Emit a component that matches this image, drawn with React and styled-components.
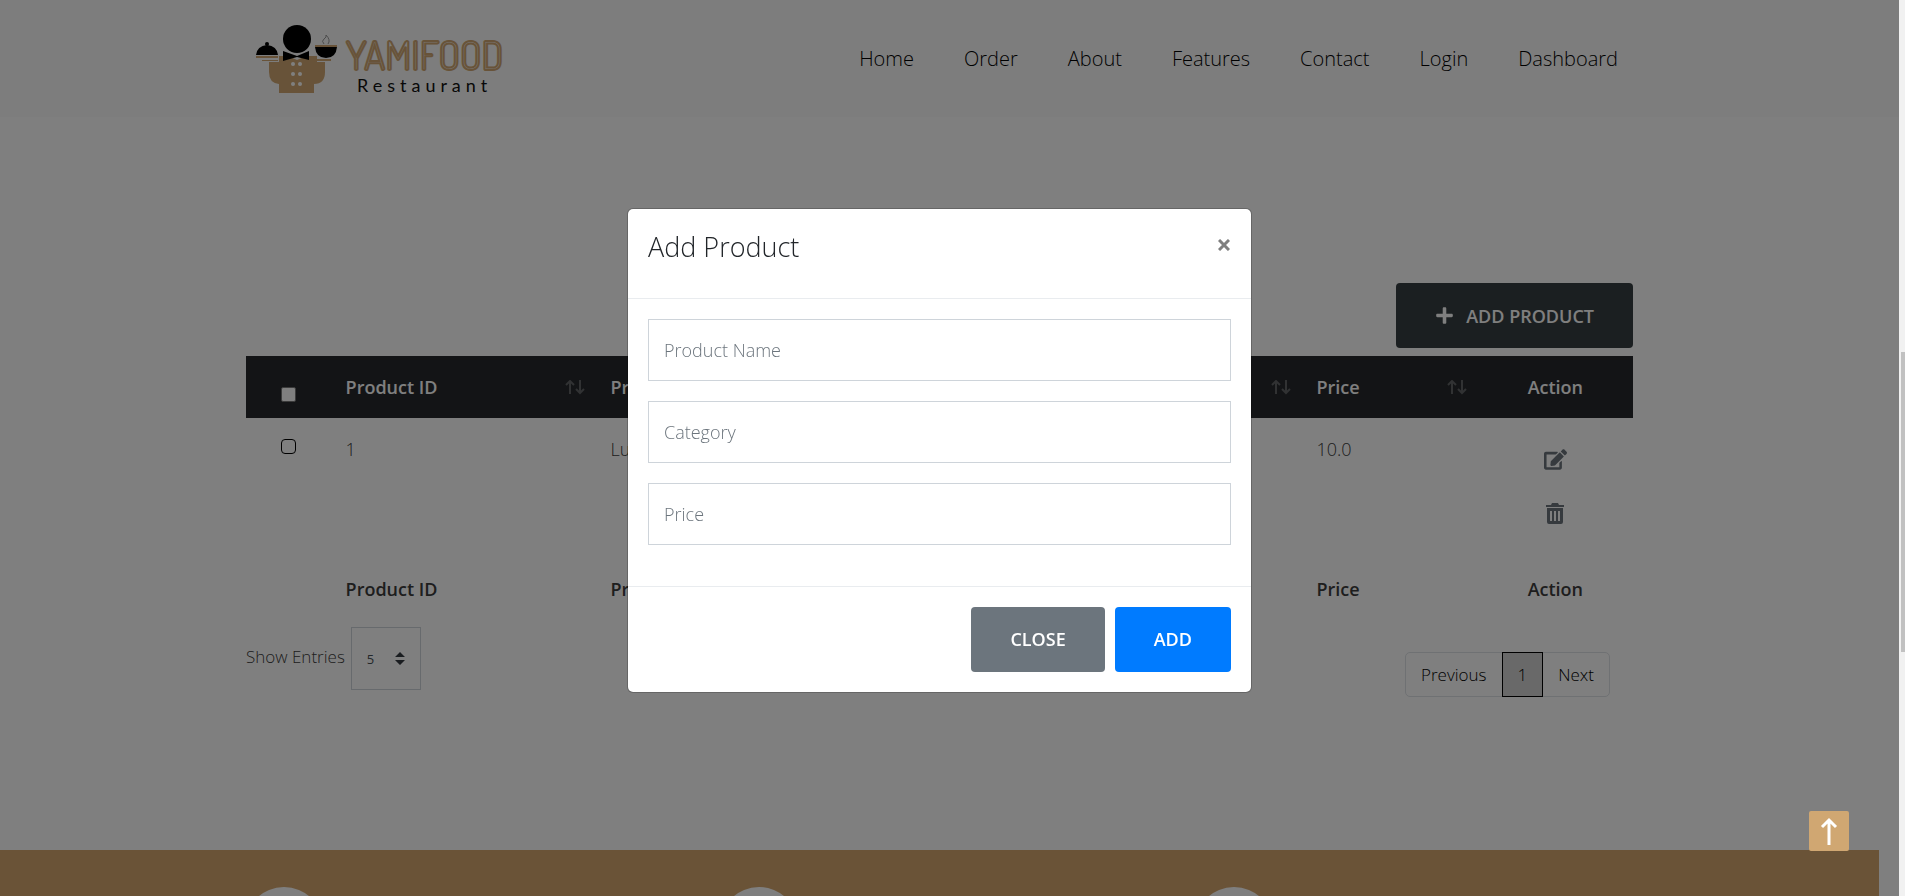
import React from 'react';
import styled, { createGlobalStyle, css } from 'styled-components';
import { FaEdit, FaPlus } from 'react-icons/fa';

const GlobalStyle = createGlobalStyle`
  *, *::before, *::after { box-sizing: border-box; }
  body { margin: 0; background: #fff; }
  body, button, input, select { font-family: 'Open Sans', 'Noto Sans', sans-serif; }
`;

const Viewport = styled.div`
  position: relative;
  height: 100vh;
  overflow: hidden;
  padding-right: 26px;
  font-size: 17px;
  font-weight: 300;
  line-height: 30px;
  color: #3c3c3c;
`;

const Container = styled.div`
  width: 100%;
  max-width: 1387px;
  margin: 0 auto;
`;

const Header = styled.header`
  margin-right: -26px;
  padding-right: 26px;
  background: #fafafa;
`;

const HeaderBar = styled(Container)`
  display: flex;
  align-items: center;
  justify-content: space-between;
  height: 117px;
  padding: 0 15px 0 8px;
`;

const Nav = styled.nav`
  display: flex;
  gap: 50px;
`;

const NavLink = styled.a`
  font-size: 20px;
  color: #010101;
  text-decoration: none;
`;

const Main = styled(Container).attrs({ as: 'main' })`
  padding: 166px 0 153px;
`;

const Toolbar = styled.div`
  display: flex;
  justify-content: flex-end;
  margin-bottom: 8px;
`;

const tones = {
  dark: '#363e42',
  grey: '#6c757d',
  blue: '#007bff',
};

const Button = styled.button`
  display: inline-flex;
  align-items: center;
  gap: 12px;
  height: 65px;
  padding: 0 39px;
  border: 0;
  border-radius: 4px;
  background: ${({ $tone }) => tones[$tone]};
  color: #fff;
  font-size: 18px;
  font-weight: 600;
  text-transform: uppercase;
  cursor: pointer;
`;

const Table = styled.table`
  width: 100%;
  table-layout: fixed;
  border-collapse: collapse;
`;

const cell = css`
  padding: 16px ${({ $center }) => ($center ? '15px' : '11px')} 16px 15px;
  text-align: ${({ $center }) => ($center ? 'center' : 'left')};
  vertical-align: top;
  font-size: 18px;
`;

const HeadCell = styled.th`
  ${cell}
  font-weight: 600;
`;

const Cell = styled.td`
  ${cell}
`;

const HeadRow = styled.tr`
  height: 62px;
  background: #26292c;
  color: #fff;
`;

const BodyRow = styled.tr`
  height: 140px;
`;

const SortLabel = styled.span`
  display: flex;
  align-items: center;
  justify-content: space-between;
`;

const Check = styled.input`
  display: block;
  width: 15px;
  height: 15px;
  margin: ${({ $head }) => ($head ? '15px' : '5px')} auto 0;
  appearance: none;
  border: 1px solid ${({ $head }) => ($head ? '#767676' : '#000')};
  border-radius: ${({ $head }) => ($head ? '2px' : '4px')};
  background: #fff;
`;

const Actions = styled.div`
  display: flex;
  flex-direction: column;
  align-items: center;
  gap: 32px;
  padding-top: 14px;
`;

const IconButton = styled.button`
  display: flex;
  padding: 0;
  border: 0;
  background: none;
  color: #6c757d;
  cursor: pointer;
`;

const TableFooter = styled.div`
  display: grid;
  grid-template-columns: 1fr auto 1fr;
  align-items: start;
  padding: 7px 23px 0 0;
`;

const Entries = styled.label`
  display: flex;
  align-items: flex-start;
  gap: 6px;
  line-height: 60px;
`;

const SelectBox = styled.span`
  display: grid;
  align-items: center;
  width: 70px;
  height: 63px;
  border: 1px solid #ced4da;

  > * { grid-area: 1 / 1; }
  > svg { justify-self: end; margin-right: 15px; pointer-events: none; }
`;

const Select = styled.select`
  width: 100%;
  height: 100%;
  padding: 0 15px;
  border: 0;
  appearance: none;
  background: none;
  color: #495057;
  font-size: 13px;
`;

const Info = styled.p`
  margin: 36px 0 0;
`;

const Pages = styled.div`
  display: flex;
  justify-self: end;
  margin-top: 25px;
`;

const PageButton = styled.button`
  height: 45px;
  padding: 0 15px;
  margin-left: -1px;
  border: 1px solid ${({ $current }) => ($current ? '#000' : '#dee2e6')};
  background: ${({ $current }) => ($current ? '#d2d2d2' : '#fff')};
  color: #000;
  font-size: 17px;
  font-weight: 300;
  position: relative;
  z-index: ${({ $current }) => ($current ? 1 : 0)};
  cursor: pointer;

  &:first-child { border-radius: 5px 0 0 5px; }
  &:last-child { border-radius: 0 5px 5px 0; }
`;

const Contact = styled.section`
  padding: 37px 0;
  background: #d5a76f;
`;

const ContactGrid = styled.div`
  display: grid;
  grid-template-columns: repeat(3, 1fr);
  max-width: 1425px;
  margin: 0 auto;
`;

const Disc = styled.span`
  width: 78px;
  height: 78px;
  margin-left: 18px;
  border-radius: 50%;
  background: #fff;
`;

const Backdrop = styled.div`
  position: fixed;
  inset: 0 6px 0 0;
  z-index: 10;
  background: rgba(0, 0, 0, 0.5);
`;

const DialogLayer = styled.div`
  position: fixed;
  inset: 0 26px 0 0;
  z-index: 11;
  display: flex;
  align-items: center;
  justify-content: center;
  padding-top: 4px;
`;

const Dialog = styled.form`
  width: 625px;
  border: 1px solid rgba(0, 0, 0, 0.2);
  border-radius: 6px;
  background: #fff;
  background-clip: padding-box;
`;

const DialogHeader = styled.div`
  display: flex;
  justify-content: space-between;
  align-items: flex-start;
  height: 90px;
  padding: 20px;
  border-bottom: 1px solid #e9ecef;
`;

const DialogTitle = styled.h4`
  margin: 0;
  font-size: 27px;
  font-weight: 300;
  line-height: 36px;
  color: #212529;
`;

const DialogClose = styled.button`
  display: flex;
  padding: 10px 1px 0;
  border: 0;
  background: none;
  color: #7f7f7f;
  cursor: pointer;
`;

const DialogBody = styled.div`
  display: flex;
  flex-direction: column;
  gap: 20px;
  padding: 20px 20px 41px;
`;

const Field = styled.input`
  width: 100%;
  height: 62px;
  padding: 0 15px;
  border: 1px solid #ced4da;
  border-radius: 0;
  font-size: 18px;
  font-weight: 300;

  &::placeholder { color: #6c757d; opacity: 1; }
`;

const DialogFooter = styled.div`
  display: flex;
  justify-content: flex-end;
  gap: 10px;
  padding: 20px;
  border-top: 1px solid #e9ecef;
`;

const BackToTop = styled.a`
  position: fixed;
  right: 56px;
  bottom: 45px;
  z-index: 12;
  display: flex;
  align-items: center;
  justify-content: center;
  width: 40px;
  height: 40px;
  border-radius: 2px;
  background: #d0a772;
`;

const ScrollTrack = styled.div`
  position: fixed;
  inset: 0 0 0 auto;
  z-index: 12;
  width: 6px;
  padding: 352px 0 0 2px;
  background: #f1f1f1;
`;

const ScrollThumb = styled.div`
  height: 300px;
  background: #c1c1c1;
`;

function Logo() {
  return (
    <svg width="254" height="72" viewBox="254 22 254 72" role="img" aria-label="Yamifood Restaurant">
      <g fill="#d0a772">
        <path d="M279 55h9l9 4 9-4h11v6h8v10q0 12-11 12v9h-35v-9q-10-1-10-12V61h10z" />
        <path d="M256 55h22v2h-22zM262 59h16v1h-16zM315 44h22v2h-22zM315 58h16v2h-16z" />
      </g>
      <g fill="#010101">
        <circle cx="297" cy="38" r="14" />
        <path d="M283 50l14 5 12-5v9l-12-3-14 4z" />
        <path d="M256 54q1-9 11-10 10 1 11 10z" />
        <circle cx="267" cy="43" r="2" />
        <path d="M315 46h22q-1 11-11 11t-11-11z" />
      </g>
      <path d="M324 43q-3-3 0-5t2-4q5 5 2 9" fill="none" stroke="#999" />
      <g fill="#fff">
        {[63, 73, 83].map((y) => (
          <React.Fragment key={y}>
            <circle cx="293" cy={y} r="2" />
            <circle cx="300" cy={y} r="2" />
          </React.Fragment>
        ))}
      </g>
      <text x="346" y="69" fontFamily="Dosis, Lato, sans-serif" fontSize="39" fontWeight="400" fill="none" stroke="#d0a772" strokeWidth="2">YAMIFOOD</text>
      <text x="357" y="91" fontFamily="Lato, sans-serif" fontSize="18" fontWeight="400" letterSpacing="5" fill="#111">Restaurant</text>
    </svg>
  );
}

const SortArrows = () => (
  <svg width="20" height="15" viewBox="0 0 20 15" fill="none" stroke="#626467" strokeWidth="2" aria-hidden="true">
    <path d="M5 14V1M1 5l4-4 4 4M15 0v13M11 9l4 4 4-4" />
  </svg>
);

const TrashIcon = () => (
  <svg width="18" height="22" viewBox="0 0 18 22" aria-hidden="true">
    <path fill="currentColor" fillRule="evenodd" d="M0 2h5l1-2h6l1 2h5v2H0zM1 5h16v14q0 2-2 2H3q-2 0-2-2zM4 8v10h2V8zM8 8v10h2V8zM12 8v10h2V8z" />
  </svg>
);

const SelectArrows = () => (
  <svg width="10" height="13" viewBox="0 0 10 13" fill="#343a40" aria-hidden="true">
    <path d="M0 5l5-5 5 5zM0 8h10l-5 5z" />
  </svg>
);

const CloseIcon = () => (
  <svg width="12" height="12" viewBox="0 0 12 12" fill="none" stroke="currentColor" strokeWidth="3" aria-hidden="true">
    <path d="M1 1l10 10M11 1L1 11" />
  </svg>
);

const links = ['Home', 'Order', 'About', 'Features', 'Contact', 'Login', 'Dashboard'];
const columns = ['Product ID', 'Product Name', 'Category', 'Price'];
const fields = ['Product Name', 'Category', 'Price'];

export default function App() {
  return (
    <>
      <GlobalStyle />
      <Viewport>
        <Header>
          <HeaderBar>
            <Logo />
            <Nav>
              {links.map((name) => (
                <NavLink href="#" key={name}>{name}</NavLink>
              ))}
            </Nav>
          </HeaderBar>
        </Header>

        <Main>
          <Toolbar>
            <Button type="button" $tone="dark"><FaPlus size={19} />Add Product</Button>
          </Toolbar>
          <Table>
            <colgroup>
              <col style={{ width: '6.1%' }} />
              <col style={{ width: '19.1%' }} />
              <col />
              <col />
              <col style={{ width: '12.7%' }} />
              <col style={{ width: '11.2%' }} />
            </colgroup>
            <thead>
              <HeadRow>
                <HeadCell $center><Check type="checkbox" $head aria-label="Select all" /></HeadCell>
                {columns.map((name) => (
                  <HeadCell key={name}><SortLabel>{name}<SortArrows /></SortLabel></HeadCell>
                ))}
                <HeadCell $center>Action</HeadCell>
              </HeadRow>
            </thead>
            <tbody>
              <BodyRow>
                <Cell $center><Check type="checkbox" aria-label="Select product 1" /></Cell>
                <Cell>1</Cell>
                <Cell>Lunch</Cell>
                <Cell>Food</Cell>
                <Cell>10.0</Cell>
                <Cell $center>
                  <Actions>
                    <IconButton type="button" aria-label="Edit"><FaEdit size={23} /></IconButton>
                    <IconButton type="button" aria-label="Delete"><TrashIcon /></IconButton>
                  </Actions>
                </Cell>
              </BodyRow>
            </tbody>
            <tfoot>
              <tr>
                <HeadCell />
                {columns.map((name) => <HeadCell key={name}>{name}</HeadCell>)}
                <HeadCell $center>Action</HeadCell>
              </tr>
            </tfoot>
          </Table>
          <TableFooter>
            <Entries>
              Show Entries
              <SelectBox>
                <Select defaultValue="5"><option>5</option><option>10</option></Select>
                <SelectArrows />
              </SelectBox>
            </Entries>
            <Info>Showing 1 to 1 of 1 Entries</Info>
            <Pages>
              <PageButton type="button">Previous</PageButton>
              <PageButton type="button" $current>1</PageButton>
              <PageButton type="button">Next</PageButton>
            </Pages>
          </TableFooter>
        </Main>

        <Contact>
          <ContactGrid><Disc /><Disc /><Disc /></ContactGrid>
        </Contact>
      </Viewport>

      <Backdrop />
      <DialogLayer>
        <Dialog role="dialog" aria-labelledby="dialog-title">
          <DialogHeader>
            <DialogTitle id="dialog-title">Add Product</DialogTitle>
            <DialogClose type="button" aria-label="Close"><CloseIcon /></DialogClose>
          </DialogHeader>
          <DialogBody>
            {fields.map((name) => (
              <Field key={name} type="text" placeholder={name} aria-label={name} />
            ))}
          </DialogBody>
          <DialogFooter>
            <Button type="button" $tone="grey">Close</Button>
            <Button type="button" $tone="blue">Add</Button>
          </DialogFooter>
        </Dialog>
      </DialogLayer>
      <BackToTop href="#" aria-label="Back to top">
        <svg width="18" height="28" viewBox="0 0 18 28" fill="none" stroke="#fff" strokeWidth="3" aria-hidden="true">
          <path d="M9 28V3M2 10l7-7 7 7" />
        </svg>
      </BackToTop>
      <ScrollTrack><ScrollThumb /></ScrollTrack>
    </>
  );
}
